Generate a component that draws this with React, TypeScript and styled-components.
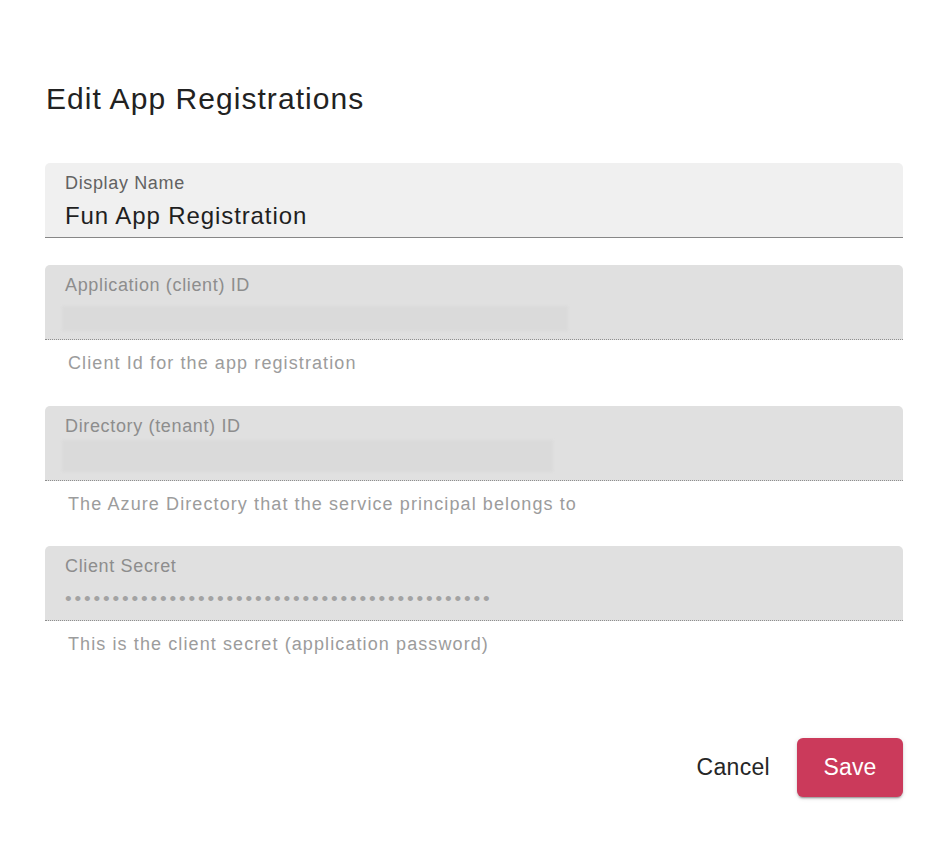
import React from "react";
import styled, { createGlobalStyle } from "styled-components";

const GlobalStyle = createGlobalStyle`
  html, body {
    margin: 0;
    padding: 0;
    background: #ffffff;
  }
  body {
    font-family: "Liberation Sans", Arial, Helvetica, sans-serif;
    -webkit-font-smoothing: antialiased;
  }
  * { box-sizing: border-box; }
`;

const Dialog = styled.div`
  width: 950px;
  min-height: 844px;
  padding: 81px 47px 0 45px;
  display: flex;
  flex-direction: column;
`;

const Title = styled.h2`
  margin: 0 0 46px 1px;
  font-size: 30px;
  line-height: 36px;
  font-weight: 400;
  letter-spacing: 1.05px;
  color: #222222;
`;

const FormControl = styled.div`
  display: flex;
  flex-direction: column;
  margin-bottom: ${(p: { $mb: number }) => p.$mb}px;
`;

const Field = styled.div<{ $disabled?: boolean }>`
  height: 75px;
  padding: 9px 18px 0 20px;
  border-radius: 5px 5px 0 0;
  background: ${(p) => (p.$disabled ? "#e0e0e0" : "#f0f0f0")};
  border-bottom: 1px ${(p) => (p.$disabled ? "dotted" : "solid")}
    ${(p) => (p.$disabled ? "#8e8e8e" : "#878787")};
  display: flex;
  flex-direction: column;
`;

const Label = styled.label<{ $disabled?: boolean }>`
  display: block;
  font-size: 18px;
  line-height: 22px;
  letter-spacing: 0.65px;
  color: ${(p) => (p.$disabled ? "#8d8d8d" : "#626262")};
  margin-bottom: 7px;
`;

const Value = styled.div`
  height: 30px;
  font-size: 24px;
  line-height: 30px;
  letter-spacing: 0.9px;
  color: #1f1f1f;
  display: flex;
  align-items: center;
`;

const Redacted = styled.div<{ $w: number; $h: number; $shift: number }>`
  width: ${(p) => p.$w}px;
  height: ${(p) => p.$h}px;
  margin-left: -3px;
  margin-bottom: ${(p) => p.$shift}px;
  background: #dadada;
  border-radius: 2px;
  filter: blur(1px);
`;

const Dots = styled.div`
  font-size: 19px;
  line-height: 30px;
  height: 30px;
  color: #a3a3a3;
  letter-spacing: 2.85px;
  white-space: nowrap;
  overflow: hidden;
`;

const Helper = styled.p`
  margin: 11px 0 0 23px;
  font-size: 18px;
  line-height: 24px;
  color: #9c9c9c;
  letter-spacing: 1.1px;
`;

const Actions = styled.div`
  margin-top: 82px;
  display: flex;
  justify-content: flex-end;
  align-items: center;
  gap: 14px;
`;

const TextButton = styled.button`
  height: 59px;
  padding: 0 13px;
  border: none;
  background: transparent;
  font-family: inherit;
  font-size: 23px;
  letter-spacing: 0.3px;
  color: #262626;
  cursor: pointer;
`;

const PrimaryButton = styled.button`
  width: 106px;
  height: 59px;
  border: none;
  border-radius: 6px;
  background: #cb3a5b;
  color: #ffffff;
  font-family: inherit;
  font-size: 23px;
  letter-spacing: 0.2px;
  cursor: pointer;
  box-shadow: 0 3px 1px -2px rgba(0, 0, 0, 0.2), 0 2px 2px 0 rgba(0, 0, 0, 0.14),
    0 1px 5px 0 rgba(0, 0, 0, 0.12);
`;

export default function App() {
  return (
    <>
      <GlobalStyle />
      <Dialog>
        <Title>Edit App Registrations</Title>

        <FormControl $mb={27}>
          <Field>
            <Label>Display Name</Label>
            <Value>Fun App Registration</Value>
          </Field>
        </FormControl>

        <FormControl $mb={31}>
          <Field $disabled>
            <Label $disabled>Application (client) ID</Label>
            <Value>
              <Redacted $w={506} $h={25} $shift={0} />
            </Value>
          </Field>
          <Helper>Client Id for the app registration</Helper>
        </FormControl>

        <FormControl $mb={30}>
          <Field $disabled>
            <Label $disabled>Directory (tenant) ID</Label>
            <Value>
              <Redacted $w={491} $h={32} $shift={6} />
            </Value>
          </Field>
          <Helper>The Azure Directory that the service principal belongs to</Helper>
        </FormControl>

        <FormControl $mb={0}>
          <Field $disabled>
            <Label $disabled>Client Secret</Label>
            <Dots>{"\u2022".repeat(45)}</Dots>
          </Field>
          <Helper>This is the client secret (application password)</Helper>
        </FormControl>

        <Actions>
          <TextButton type="button">Cancel</TextButton>
          <PrimaryButton type="button">Save</PrimaryButton>
        </Actions>
      </Dialog>
    </>
  );
}
